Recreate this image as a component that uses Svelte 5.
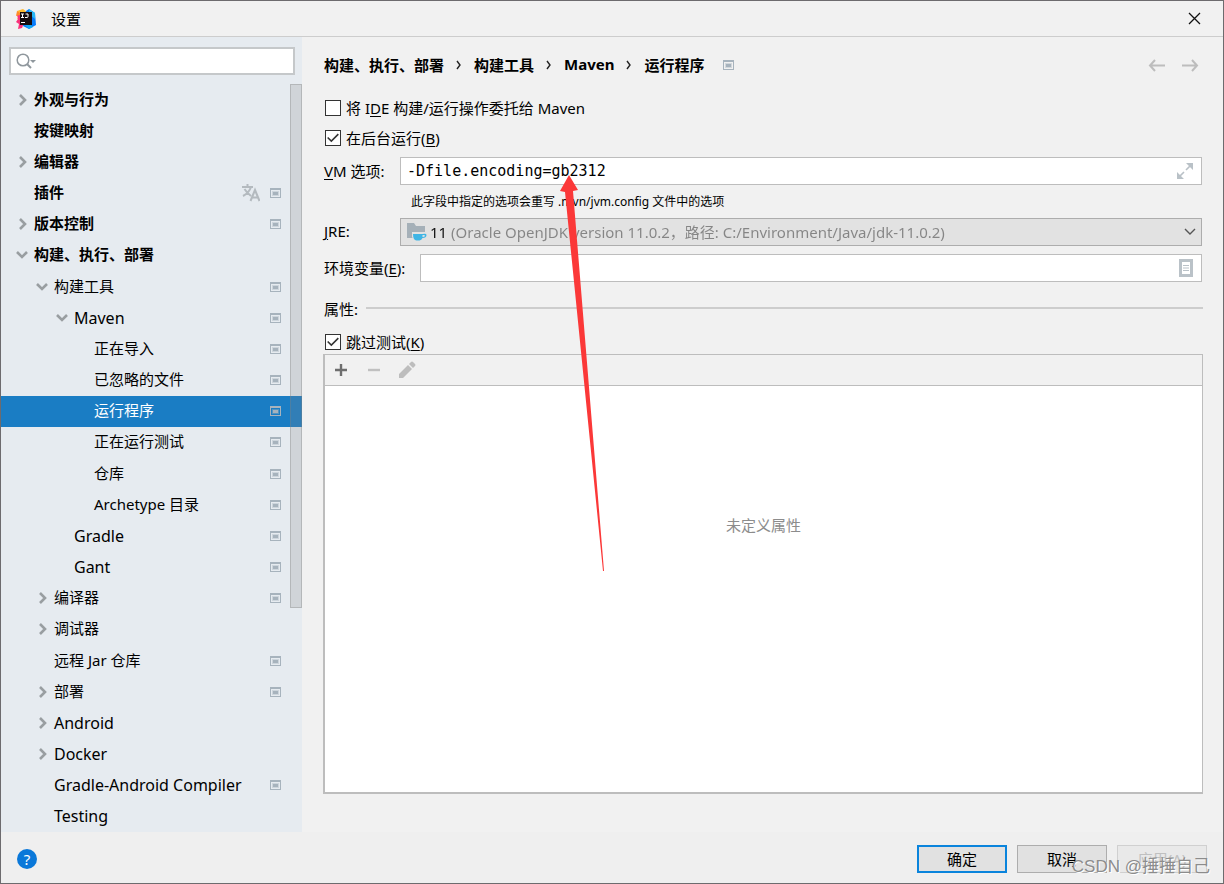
<script lang="ts">
    type Item = {
        label: string;
        level: number;
        arrow?: "open" | "closed";
        project?: boolean;
        translate?: boolean;
        latin?: boolean;
    };

    const items: Item[] = [
        { label: "外观与行为", level: 0, arrow: "closed" },
        { label: "按键映射", level: 0 },
        { label: "编辑器", level: 0, arrow: "closed" },
        { label: "插件", level: 0, project: true, translate: true },
        { label: "版本控制", level: 0, arrow: "closed", project: true },
        { label: "构建、执行、部署", level: 0, arrow: "open" },
        { label: "构建工具", level: 1, arrow: "open", project: true },
        { label: "Maven", level: 2, arrow: "open", project: true, latin: true },
        { label: "正在导入", level: 3, project: true },
        { label: "已忽略的文件", level: 3, project: true },
        { label: "运行程序", level: 3, project: true },
        { label: "正在运行测试", level: 3, project: true },
        { label: "仓库", level: 3, project: true },
        { label: "Archetype 目录", level: 3, project: true },
        { label: "Gradle", level: 2, project: true, latin: true },
        { label: "Gant", level: 2, project: true, latin: true },
        { label: "编译器", level: 1, arrow: "closed", project: true },
        { label: "调试器", level: 1, arrow: "closed" },
        { label: "远程 Jar 仓库", level: 1, project: true },
        { label: "部署", level: 1, arrow: "closed", project: true },
        { label: "Android", level: 1, arrow: "closed", latin: true },
        { label: "Docker", level: 1, arrow: "closed", latin: true },
        { label: "Gradle-Android Compiler", level: 1, project: true, latin: true },
        { label: "Testing", level: 1, latin: true },
    ];
    const path = ["构建、执行、部署", "构建工具", "Maven", "运行程序"];

    let selected = $state("运行程序");
    let search = $state("");
    let delegate = $state(false);
    let background = $state(true);
    let skipTests = $state(true);
    let vmOptions = $state("-Dfile.encoding=gb2312");
    let env = $state("");
</script>

{#snippet projectIcon()}
    <svg class="project-icon" width="12" height="10" viewBox="0 0 12 10">
        <path d="M0 0h11v10H0zM1 2v7h9V2z" fill="#a7b3bd" fill-rule="evenodd" />
        <path d="M2 3h7v5H2z" fill="#a7b3bd" opacity="0.4" />
        <path d="M3 4h5v3H3z" fill="#a7b3bd" />
    </svg>
{/snippet}

<div class="dialog">
    <header class="titlebar">
        <svg width="20" height="20" viewBox="0 0 20 20">
            <path d="M1 2l6-2 4 3-2 9-8-2 2-3z" fill="#fdb92e" />
            <path d="M1 6l5-3 4 6-4 10-4 1 1-5-3-2 2-3z" fill="#f9317a" />
            <path d="M10 2l3-2 6 4 1 12-7 4-6-3z" fill="#087cfa" />
            <path d="M13 0l6 4v6l-6-5z" fill="#28b8f4" />
            <path d="M8 15l5 5 4-2-3-3z" fill="#12a8f3" />
            <path d="M1 2l3 2v2L0 7z" fill="#ff8a2b" />
            <path d="M4 3h12v13H4z" fill="#160c0e" />
            <path
                d="M5 5h3M6.500 5v4M5 8.500h3M9.500 5H12v2.500q0 1-1 1H9M5 13.500h4"
                fill="none"
                stroke="#fff"
            />
        </svg>
        <h1>设置</h1>
        <button class="close" aria-label="关闭">
            <svg width="13" height="13" viewBox="0 0 13 13">
                <path d="M1 1l11 11M12 1L1 12" stroke="#111" stroke-width="1.3" />
            </svg>
        </button>
    </header>

    <div class="body">
        <aside class="sidebar">
            <div class="search">
                <svg width="22" height="18" viewBox="0 0 22 18">
                    <circle cx="7" cy="8" r="5.8" fill="none" stroke="#8f979d" stroke-width="1.5" />
                    <path d="M11 12l4 4" stroke="#8f979d" stroke-width="2" />
                    <path d="M14 8h6l-3 3z" fill="#8f979d" />
                </svg>
                <input type="text" aria-label="搜索" bind:value={search} />
            </div>
            <div class="tree-area">
                <ul class="tree">
                    {#each items as item}
                        <li>
                            <button
                                class="node level-{item.level}"
                                class:selected={selected === item.label}
                                onclick={() => (selected = item.label)}
                            >
                                <span class="arrow">
                                    {#if item.arrow === "closed"}
                                        <svg width="12" height="12" viewBox="0 0 12 12">
                                            <path d="M4 1l5 5-5 5" />
                                        </svg>
                                    {:else if item.arrow === "open"}
                                        <svg width="12" height="12" viewBox="0 0 12 12">
                                            <path d="M1 3l5 5 5-5" />
                                        </svg>
                                    {/if}
                                </span>
                                <span class="label" class:latin={item.latin}>{item.label}</span>
                                {#if item.translate}
                                    <svg class="translate" width="18" height="18" viewBox="0 0 18 18">
                                        <path
                                            d="M0 3h11M5.500 0v3M9 3Q7 9 1 12M2.500 5Q5 9 9 12M8.500 17L13 6l4.500 11M10 13.500h6"
                                            fill="none"
                                            stroke="#b4babf"
                                            stroke-width="2"
                                        />
                                    </svg>
                                {/if}
                                {#if item.project}
                                    {@render projectIcon()}
                                {/if}
                            </button>
                        </li>
                    {/each}
                </ul>
                <div class="thumb"></div>
            </div>
        </aside>

        <main>
            <div class="heading">
                <nav class="breadcrumbs">
                    {#each path as part, i}
                        {#if i > 0}
                            <svg width="6" height="10" viewBox="0 0 6 10">
                                <path d="M1 1l3 4-3 4" fill="none" stroke="#222" stroke-width="1.4" />
                            </svg>
                        {/if}
                        <span>{part}</span>
                    {/each}
                    {@render projectIcon()}
                </nav>
                <div class="history">
                    <button aria-label="后退" disabled>
                        <svg width="17" height="13" viewBox="0 0 17 13">
                            <path d="M7 1L2 6.500l5 5.500M2 6.500h15" />
                        </svg>
                    </button>
                    <button aria-label="前进" disabled>
                        <svg width="17" height="13" viewBox="0 0 17 13">
                            <path d="M10 1l5 5.500-5 5.500M15 6.500H0" />
                        </svg>
                    </button>
                </div>
            </div>

            <label class="check">
                <input type="checkbox" bind:checked={delegate} />
                <span>将 I<u>D</u>E 构建/运行操作委托给 Maven</span>
            </label>
            <label class="check">
                <input type="checkbox" bind:checked={background} />
                <span>在后台运行(<u>B</u>)</span>
            </label>

            <div class="row vm">
                <label for="vm"><u>V</u>M 选项:</label>
                <div class="field">
                    <input id="vm" class="mono" type="text" spellcheck="false" bind:value={vmOptions} />
                    <button aria-label="展开">
                        <svg width="16" height="16" viewBox="0 0 16 16">
                            <path d="M9 0h7v7zM0 9v7h7z" fill="#b9c1c7" />
                            <path d="M9 7l5-5M7 9l-5 5" stroke="#b9c1c7" stroke-width="1.6" />
                        </svg>
                    </button>
                </div>
            </div>
            <p class="note">此字段中指定的选项会重写 .mvn/jvm.config 文件中的选项</p>

            <div class="row">
                <label for="jre"><u>J</u>RE:</label>
                <div class="field combo">
                    <svg class="folder" width="20" height="18" viewBox="0 0 20 18">
                        <path d="M0 0h7l2 3h9v12H0z" fill="#a5b0b8" />
                        <path d="M5 9h15v5l-3 4H8l-3-4z" fill="#e2e2e2" />
                        <path
                            d="M6 11h9.500q4-1 4 1 0 3-4 3-1 2-3 2.500h-3Q6 17 6 11zM15.500 12v2q2.500 0 2.500-1.500 0-.8-2.500-.5z"
                            fill="#3fb5e5"
                            fill-rule="evenodd"
                        />
                    </svg>
                    <select id="jre">
                        <option>11 (Oracle OpenJDK version 11.0.2，路径: C:/Environment/Java/jdk-11.0.2)</option>
                    </select>
                    <svg class="caret" width="12" height="8" viewBox="0 0 12 8">
                        <path d="M1 1l5 5 5-5" fill="none" stroke="#555" stroke-width="1.4" />
                    </svg>
                </div>
            </div>

            <div class="row env">
                <label for="env">环境变量(<u>E</u>):</label>
                <div class="field">
                    <input id="env" type="text" bind:value={env} />
                    <button aria-label="编辑环境变量">
                        <svg width="14" height="18" viewBox="0 0 14 18">
                            <path d="M1.500 1.500h11v15h-11z" fill="#fff" stroke="#bac2c8" stroke-width="3" />
                            <path d="M4 6.500h6M4 9h6M4 11.500h6" stroke="#bac2c8" />
                        </svg>
                    </button>
                </div>
            </div>

            <h2>属性:</h2>

            <label class="check tight">
                <input type="checkbox" bind:checked={skipTests} />
                <span>跳过测试(<u>K</u>)</span>
            </label>

            <section class="properties">
                <div class="toolbar">
                    <button aria-label="添加">
                        <svg width="18" height="18" viewBox="0 0 18 18">
                            <path d="M9 3v12M3 9h12" stroke="#6e6e6e" stroke-width="2.4" />
                        </svg>
                    </button>
                    <button aria-label="移除" disabled>
                        <svg width="18" height="18" viewBox="0 0 18 18">
                            <path d="M3 9h12" stroke="#c0c0c0" stroke-width="2.4" />
                        </svg>
                    </button>
                    <button aria-label="编辑" disabled>
                        <svg width="18" height="18" viewBox="0 0 18 18">
                            <path d="M1 17v-4L10 4l4 4-9 9zM11 3l2-2q1-1 2 0l2 2q1 1 0 2l-2 2z" fill="#bdbdbd" />
                        </svg>
                    </button>
                </div>
                <p class="empty">未定义属性</p>
            </section>
        </main>
    </div>

    <footer>
        <button class="help" aria-label="帮助">?</button>
        <button class="action primary">确定</button>
        <button class="action">取消</button>
        <button class="action" disabled>应用(A)</button>
        <span class="watermark">CSDN @捶捶自己</span>
    </footer>

    <svg class="pointer" width="50" height="400" viewBox="0 0 50 400">
        <path d="M14 0L23 15l-5 1 31 380h-1L10 17l-5-1z" fill="#fb3838" />
    </svg>
</div>

<style>
    :global(body) {
        margin: 0;
    }

    .dialog {
        position: relative;
        box-sizing: border-box;
        min-height: 100vh;
        display: flex;
        flex-direction: column;
        border: 1px solid #6d6b6e;
        background-color: #f1f1f1;
        color: #000;
        font-family: "Noto Sans", "Noto Sans CJK SC", sans-serif;
        font-size: 15px;
    }

    button,
    input,
    select {
        font: inherit;
        color: inherit;
        margin: 0;
        padding: 0;
    }

    button {
        display: flex;
        align-items: center;
        justify-content: center;
        border: none;
        background: none;
    }

    u {
        text-underline-offset: 2px;
    }

    .titlebar {
        display: flex;
        align-items: center;
        gap: 15px;
        height: 35px;
        padding: 0 22px 0 15px;
        border-bottom: 1px solid #cdcdcd;
    }

    h1 {
        flex: 1;
        margin: 0;
        font-size: 15px;
        font-weight: 400;
    }

    .body {
        flex: 1;
        display: flex;
    }

    .sidebar {
        width: 301px;
        display: flex;
        flex-direction: column;
        background-color: #e6ebf0;
    }

    .search {
        display: flex;
        align-items: center;
        height: 24px;
        margin: 10px 7px 9px 8px;
        padding-left: 5px;
        border: 2px solid #c5c8ca;
        background-color: #fff;
    }

    .search input {
        flex: 1;
        min-width: 0;
        border: none;
        outline: none;
    }

    .tree-area {
        position: relative;
        flex: 1;
        display: flex;
    }

    .tree {
        flex: 1;
        display: grid;
        grid-auto-rows: 1fr;
        margin: 0;
        padding: 0;
        list-style: none;
    }

    .tree li {
        display: flex;
    }

    .node {
        flex: 1;
        justify-content: flex-start;
        padding-right: 20px;
        line-height: 24px;
    }

    .level-0 {
        padding-left: 15px;
        font-weight: 700;
    }

    .level-1 {
        padding-left: 35px;
    }

    .level-2 {
        padding-left: 55px;
    }

    .level-3 {
        padding-left: 75px;
    }

    .node.selected {
        background-color: #1a7dc4;
        color: #fff;
    }

    .arrow {
        display: flex;
        width: 18px;
    }

    .arrow path {
        fill: none;
        stroke: #999ea1;
        stroke-width: 2.6;
    }

    .label,
    .row label,
    .check span,
    .breadcrumbs span {
        padding-bottom: 2px;
    }

    .label {
        flex: 1;
        text-align: left;
    }

    .label.latin {
        padding-bottom: 0;
        font-size: 16px;
    }

    .translate {
        margin-right: 10px;
    }

    /* the scroll thumb is translucent and lies over the selected row */
    .thumb {
        position: absolute;
        box-sizing: border-box;
        top: 0;
        right: 0;
        width: 12px;
        height: 70%;
        border: 1px solid rgba(130, 130, 130, 0.35);
        background-color: rgba(130, 130, 130, 0.22);
    }

    main {
        flex: 1;
        display: flex;
        flex-direction: column;
        padding: 0 20px 38px 22px;
    }

    .heading {
        display: flex;
        align-items: center;
        justify-content: space-between;
        height: 56px;
    }

    .breadcrumbs {
        display: flex;
        align-items: center;
        gap: 12px;
        font-weight: 700;
    }

    .breadcrumbs .project-icon {
        margin-left: 7px;
    }

    .history {
        display: flex;
        gap: 17px;
        padding-right: 4px;
    }

    .history path {
        fill: none;
        stroke: #bdbdbd;
        stroke-width: 2;
    }

    .check {
        display: flex;
        align-items: center;
        gap: 5px;
        height: 30px;
    }

    .check.tight {
        height: 24px;
    }

    .check input {
        appearance: none;
        display: flex;
        box-sizing: border-box;
        width: 16px;
        height: 16px;
        margin-left: 1px;
        border: 1px solid #333;
        background-color: #fff;
    }

    .check input:checked::after {
        content: "";
        flex: 1;
        background-color: #333;
        clip-path: polygon(8% 50%, 16% 42%, 38% 64%, 84% 18%, 92% 26%, 38% 80%);
    }

    .row {
        display: flex;
        align-items: center;
    }

    .row label {
        width: 76px;
    }

    .row.vm {
        margin-top: 4px;
    }

    .row.env {
        margin-top: 8px;
    }

    .row.env label {
        width: 96px;
    }

    .field {
        flex: 1;
        display: flex;
        align-items: center;
        box-sizing: border-box;
        height: 28px;
        margin-right: 1px;
        padding: 0 8px 0 6px;
        border: 1px solid #bdbdbd;
        background-color: #fff;
    }

    .field input {
        flex: 1;
        min-width: 0;
        border: none;
        outline: none;
        background: none;
    }

    .field input.mono {
        font-family: "DejaVu Sans Mono", monospace;
    }

    .field.combo {
        padding-right: 5px;
        border-color: #adadad;
        background-color: #e2e2e2;
    }

    /* version number in black, the rest of the entry in grey */
    .combo select {
        flex: 1;
        min-width: 0;
        height: 26px;
        margin-left: 3px;
        appearance: none;
        border: none;
        outline: none;
        background: linear-gradient(to right, #111 20px, #858585 20px);
        background-clip: text;
        color: transparent;
    }

    .combo option {
        color: #111;
    }

    .note {
        margin: 0 0 0 87px;
        font-size: 12px;
        line-height: 33px;
    }

    h2 {
        display: flex;
        align-items: center;
        gap: 8px;
        height: 44px;
        margin: 4px 0 0;
        font-size: 15px;
        font-weight: 400;
    }

    h2::after {
        content: "";
        flex: 1;
        height: 2px;
        background-color: #cdcdcd;
    }

    .properties {
        flex: 1;
        display: flex;
        flex-direction: column;
        margin-left: -1px;
        border: 1px solid #bdbdbd;
        border-left-width: 2px;
        border-bottom-width: 2px;
        background-color: #fff;
    }

    .toolbar {
        display: flex;
        align-items: center;
        gap: 15px;
        height: 30px;
        padding-left: 7px;
        border-bottom: 1px solid #bdbdbd;
        background-color: #f1f1f1;
    }

    .empty {
        margin: 0;
        padding-top: 127px;
        line-height: 24px;
        text-align: center;
        color: #8c8c8c;
    }

    footer {
        position: relative;
        display: flex;
        align-items: center;
        gap: 10px;
        box-sizing: border-box;
        height: 51px;
        padding: 2px 16px 0;
        background-color: #efefef;
    }

    .help {
        width: 20px;
        height: 20px;
        margin-right: auto;
        border-radius: 50%;
        background-color: #0a78d9;
        color: #fff;
    }

    .action {
        width: 90px;
        height: 28px;
        border: 1px solid #adadad;
        background-color: #e1e1e1;
    }

    .action.primary {
        border: 2px solid #0a84dc;
    }

    .action:disabled {
        border-color: #d0d0d0;
        background-color: #e9e9e9;
        color: #c0c0c0;
    }

    .watermark {
        position: absolute;
        right: 13px;
        bottom: 4px;
        font-family: "Liberation Sans", "Noto Sans CJK SC", sans-serif;
        font-size: 17px;
        line-height: 24px;
        color: #8c8c8c;
        text-shadow: 1px 1px #fff;
    }

    .pointer {
        position: absolute;
        left: 554px;
        top: 174px;
        pointer-events: none;
    }
</style>
